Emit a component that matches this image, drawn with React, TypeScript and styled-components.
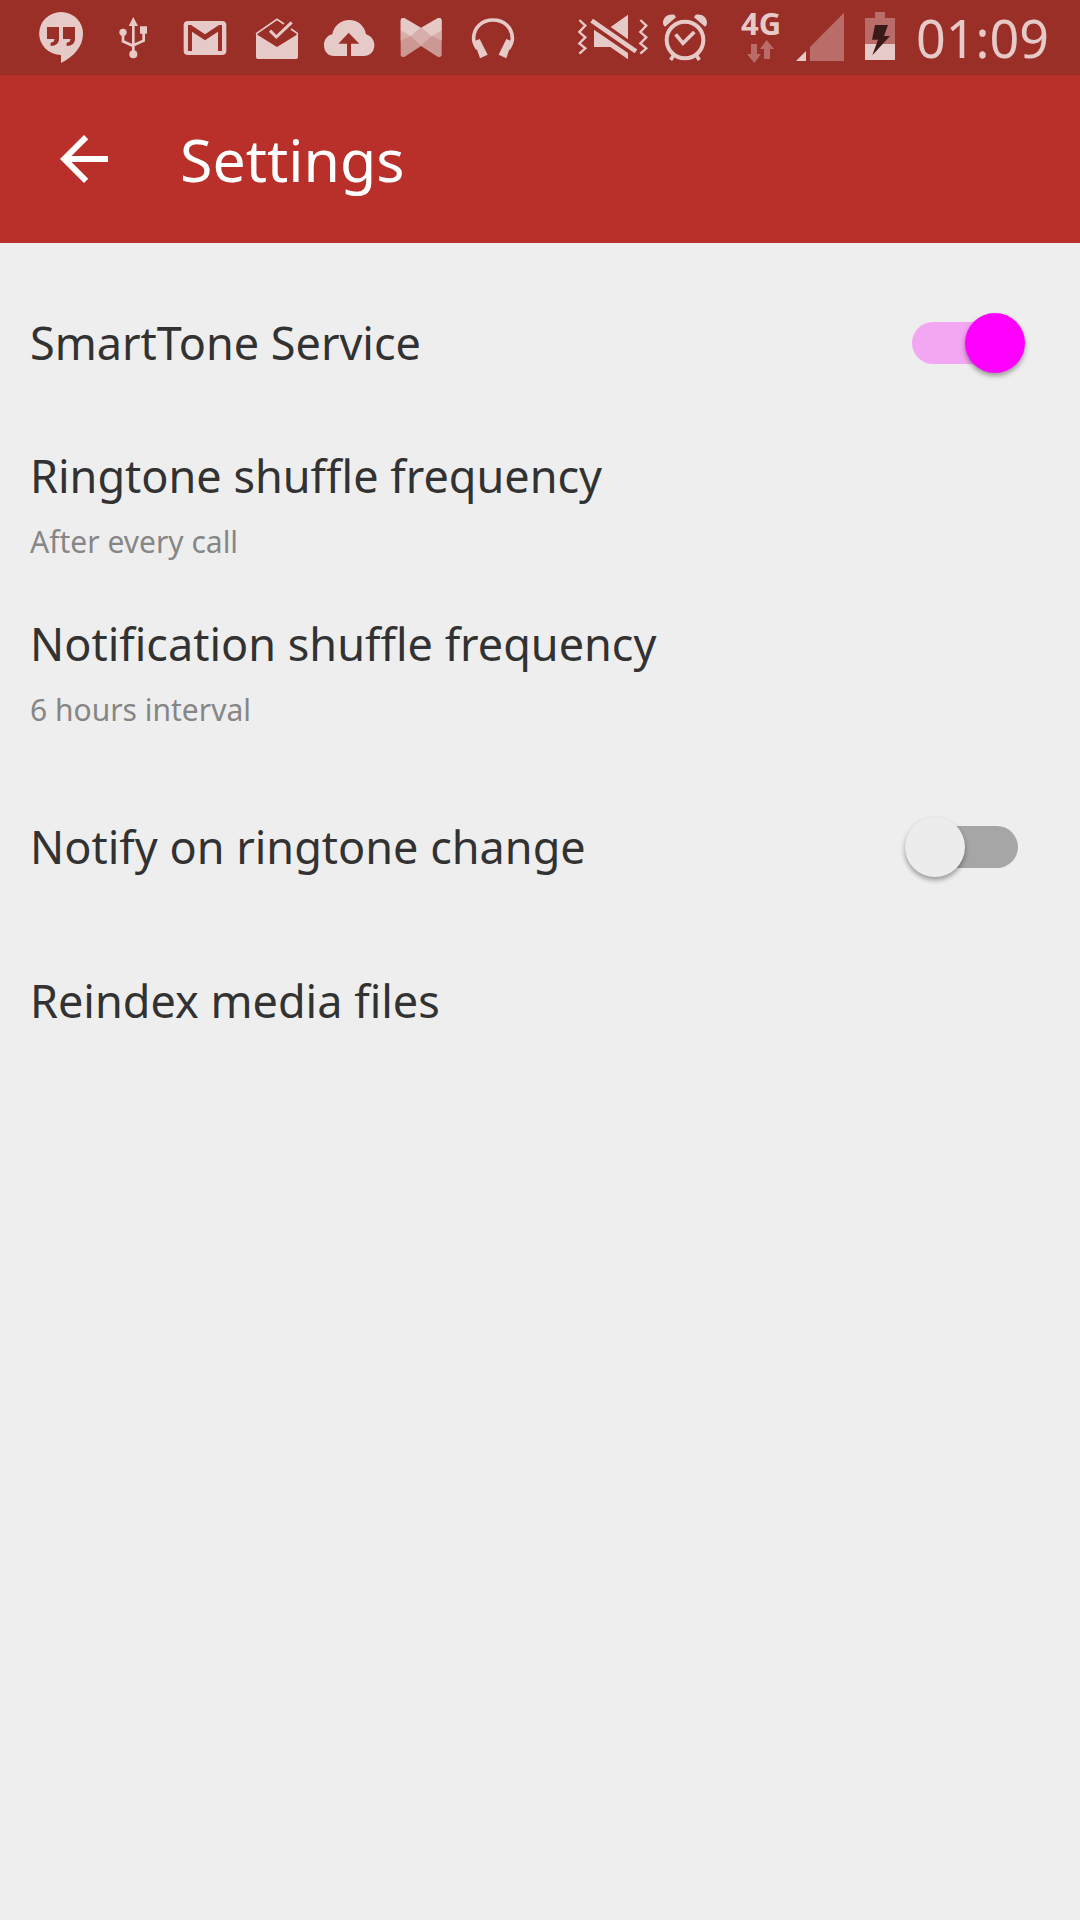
import React, { useState } from 'react';
import styled, { createGlobalStyle } from 'styled-components';

const GlobalStyle = createGlobalStyle`
  *, *::before, *::after { box-sizing: border-box; }
  body {
    margin: 0;
    background: #eeeeee;
    color: #323232;
    font-family: 'Noto Sans', 'Open Sans', sans-serif;
  }
`;

const Screen = styled.div`
  min-height: 100vh;
  display: flex;
  flex-direction: column;
`;

const StatusBar = styled.div`
  height: 75px;
  padding: 0 31px 0 25px;
  display: flex;
  justify-content: space-between;
  background: #9a2f28;
  color: #e6cac8;
`;

const StatusGroup = styled.div`
  display: flex;
  align-items: center;
`;

const StatusIcon = styled.svg<{ $width?: number }>`
  display: block;
  flex: none;
  width: ${({ $width = 72 }) => $width}px;
  height: 75px;
`;

const Network = styled.div`
  width: 52px;
  height: 75px;
  padding-top: 8px;
  display: flex;
  flex-direction: column;
  align-items: center;
`;

const NetworkType = styled.span`
  font-size: 31px;
  line-height: 30px;
  font-weight: 700;
`;

const NetworkArrows = styled.svg`
  display: block;
  width: 28px;
  height: 24px;
  margin-top: 2px;
`;

const Clock = styled.time`
  margin-left: 4px;
  font-size: 52px;
  line-height: 76px;
`;

const Toolbar = styled.header`
  min-height: 168px;
  padding: 0 48px;
  display: flex;
  align-items: center;
  gap: 60px;
  background: #b9302b;
  color: #ffffff;
`;

const BackButton = styled.button`
  padding: 0;
  border: 0;
  background: none;
  color: inherit;
  cursor: pointer;

  svg {
    display: block;
    width: 72px;
    height: 72px;
  }
`;

const Title = styled.h1`
  margin: 0;
  font-size: 59px;
  line-height: 80px;
  font-weight: 400;
`;

const List = styled.main`
  padding: 16px 0;
  display: flex;
  flex-direction: column;
`;

const ToggleRow = styled.label`
  min-height: 168px;
  padding: 0 55px 0 30px;
  display: flex;
  align-items: center;
  justify-content: space-between;
  cursor: pointer;
`;

const ActionRow = styled.button<{ $detailed?: boolean }>`
  min-height: ${({ $detailed }) => ($detailed ? 168 : 140)}px;
  padding: ${({ $detailed }) => ($detailed ? '19px 30px 33px' : '0 30px')};
  display: flex;
  flex-direction: column;
  justify-content: center;
  gap: 16px;
  border: 0;
  background: none;
  color: inherit;
  font-family: inherit;
  text-align: left;
  cursor: pointer;
`;

const Label = styled.span`
  font-size: 45px;
  line-height: 60px;
`;

const Summary = styled.span`
  font-size: 30px;
  line-height: 40px;
  color: #868686;
`;

const Switch = styled.input`
  appearance: none;
  flex: none;
  width: 120px;
  height: 60px;
  margin: 0;
  display: grid;
  align-items: center;
  cursor: pointer;

  &::before,
  &::after {
    content: '';
    grid-area: 1 / 1;
  }

  &::before {
    justify-self: center;
    width: 106px;
    height: 42px;
    border-radius: 21px;
    background: #a6a6a6;
  }

  &::after {
    justify-self: start;
    width: 60px;
    height: 60px;
    border-radius: 50%;
    background: #ececec;
    box-shadow: 0 3px 5px rgba(0, 0, 0, 0.36);
  }

  &:checked::before {
    background: #f3a7f3;
  }

  &:checked::after {
    justify-self: end;
    background: #ff00ff;
  }
`;

function Notifications() {
  return (
    <StatusGroup>
      <StatusIcon viewBox="75 0 216 225" fill="currentColor">
        <path
          fillRule="evenodd"
          d="M183 36a66 64 0 0 1 66 66c0 38-28 68-66 87v-24a65 64 0 0 1 0-129zM141 81v36h22c0 8-3 10-11 11v10c16-1 25-9 25-22V81zM189 81v36h22c0 8-3 10-11 11v10c16-1 25-9 25-22V81z"
        />
      </StatusIcon>
      <StatusIcon viewBox="291 0 216 225" fill="currentColor">
        <path d="M400 51l14 27h-28zM420 79h21v22h-21z" />
        <circle cx="369" cy="97" r="11" />
        <circle cx="400" cy="163" r="12" />
        <path
          d="M400 75v85M369 100v24l31 14M431 98v24l-31 14"
          fill="none"
          stroke="currentColor"
          strokeWidth="8"
        />
      </StatusIcon>
      <StatusIcon viewBox="507 0 216 225" fill="currentColor">
        <path
          fillRule="evenodd"
          d="M564 63h102q13 0 13 13v76q0 13-13 13H564q-13 0-13-13V76q0-13 13-13zM564 75v78h12V95l39 26 39-26v58h12V75h-9l-42 28-42-28z"
        />
      </StatusIcon>
      <StatusIcon viewBox="3 0 216 225" fill="currentColor">
        <path d="M48 102l63 39 63-39v69q0 6-6 6H54q-6 0-6-6z" />
        <path
          d="M50 104v-4l61-42 21 14M153 87l19 13v4"
          fill="none"
          stroke="currentColor"
          strokeWidth="5"
        />
        <path d="M90 92l19 19 46-44" fill="none" stroke="currentColor" strokeWidth="9" />
      </StatusIcon>
      <StatusIcon viewBox="219 0 216 225" fill="currentColor">
        <path d="M283 168c-20 0-31-14-31-33 0-16 10-29 25-32 4-26 26-43 51-43 26 0 46 18 50 43 16 5 25 17 25 33 0 19-13 32-32 32h-38v-37h25l-32-33-31 33h26v37z" />
      </StatusIcon>
      <StatusIcon viewBox="435 0 216 225">
        <path
          fill="#cc9894"
          d="M482 60q2-9 12-5l49 28 50-28q10-4 12 5v106q-2 8-12 4l-50-32-49 32q-10 4-12-4z"
        />
        <path
          fill="#d7aeab"
          d="M482 90l30 18-30 14zM605 90l-30 18 30 14zM543 83l32 25-32 29-31-29z"
        />
        <path
          fill="#e6cac8"
          d="M482 60q2-9 12-5l48 28-30 26-30-18zM605 60q-2-9-12-5l-49 28 31 26 30-18z"
        />
      </StatusIcon>
      <StatusIcon viewBox="651 0 216 225" fill="currentColor">
        <path
          d="M713 147c-9-13-13-22-12-33 1-32 25-54 58-54s57 22 58 54c1 11-3 20-12 33"
          fill="none"
          stroke="currentColor"
          strokeWidth="11"
        />
        <path d="M702 124l17-7 24 47-23 11zM816 124l-17-7-23 47 23 11z" />
      </StatusIcon>
    </StatusGroup>
  );
}

function SystemStatus() {
  return (
    <StatusGroup>
      <StatusIcon $width={80} viewBox="45 0 240 225" fill="currentColor">
        <path
          d="M58 60l18 17-18 19 18 16-18 18 18 15-18 16M241 60l18 17-18 19 18 16-18 18 18 15-18 16"
          fill="none"
          stroke="currentColor"
          strokeWidth="7"
        />
        <path d="M95 62l133 92" fill="none" stroke="currentColor" strokeWidth="14" />
        <path d="M152 81l52-37v74zM102 89l102 70v19l-53-37h-49z" />
      </StatusIcon>
      <StatusIcon $width={80} viewBox="285 0 240 225" fill="currentColor">
        <circle cx="375" cy="120" r="55" fill="none" stroke="currentColor" strokeWidth="12" />
        <path
          d="M347 103l22 27 34-34M343 163l-11 17M407 163l11 17"
          fill="none"
          stroke="currentColor"
          strokeWidth="11"
        />
        <path d="M309 68c0-17 16-28 34-24l5 8-33 28q-6-3-6-12zM441 68c0-17-16-28-34-24l-5 8 33 28q6-3 6-12z" />
      </StatusIcon>
      <Network>
        <NetworkType>4G</NetworkType>
        <NetworkArrows viewBox="564 120 84 72" fill="#b96c68">
          <path d="M576 132h18v30h12l-20 27-22-27h12zM615 177v-30h-12l20-27 22 27h-12v30z" />
        </NetworkArrows>
      </Network>
      <StatusIcon $width={65} viewBox="21 0 195 225">
        <path d="M192 38v145H90v-42z" fill="#b96c68" />
        <path d="M78 153v30H48z" fill="currentColor" />
      </StatusIcon>
      <StatusIcon $width={60} viewBox="216 0 180 225">
        <path d="M285 36h30v18h30v78h-90V54h30z" fill="#b96c68" />
        <path d="M255 132h90v48h-90z" fill="currentColor" />
        <path d="M285 75h39l-12 33h18l-53 58 17-47h-18z" fill="#3a1a19" />
      </StatusIcon>
      <Clock>01:09</Clock>
    </StatusGroup>
  );
}

export default function App() {
  const [service, setService] = useState(true);
  const [notify, setNotify] = useState(false);

  return (
    <Screen>
      <GlobalStyle />
      <StatusBar>
        <Notifications />
        <SystemStatus />
      </StatusBar>
      <Toolbar>
        <BackButton type="button" aria-label="Back">
          <svg viewBox="0 0 24 24" fill="currentColor">
            <path d="M20 11H7.83l5.59-5.59L12 4l-8 8 8 8 1.41-1.41L7.83 13H20v-2z" />
          </svg>
        </BackButton>
        <Title>Settings</Title>
      </Toolbar>
      <List>
        <ToggleRow htmlFor="service">
          <Label>SmartTone Service</Label>
          <Switch
            id="service"
            type="checkbox"
            checked={service}
            onChange={(e) => setService(e.target.checked)}
          />
        </ToggleRow>
        <ActionRow type="button" $detailed>
          <Label>Ringtone shuffle frequency</Label>
          <Summary>After every call</Summary>
        </ActionRow>
        <ActionRow type="button" $detailed>
          <Label>Notification shuffle frequency</Label>
          <Summary>6 hours interval</Summary>
        </ActionRow>
        <ToggleRow htmlFor="notify">
          <Label>Notify on ringtone change</Label>
          <Switch
            id="notify"
            type="checkbox"
            checked={notify}
            onChange={(e) => setNotify(e.target.checked)}
          />
        </ToggleRow>
        <ActionRow type="button">
          <Label>Reindex media files</Label>
        </ActionRow>
      </List>
    </Screen>
  );
}
